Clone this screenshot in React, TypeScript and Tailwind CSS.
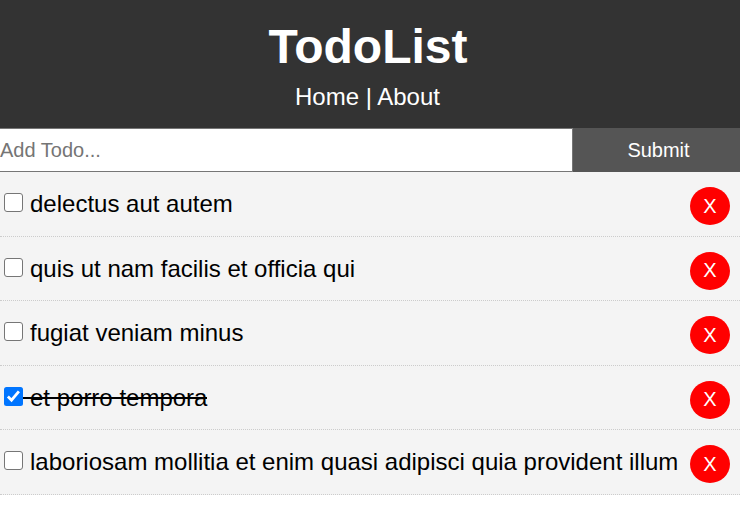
const todos = [
  { title: 'delectus aut autem', done: false, height: 'h-[65px]', inset: 'pb-0' },
  { title: 'quis ut nam facilis et officia qui', done: false, height: 'h-[64px]', inset: 'pb-[2px]' },
  { title: 'fugiat veniam minus', done: false, height: 'h-[65px]', inset: 'pb-0' },
  { title: 'et porro tempora', done: true, height: 'h-[64px]', inset: 'pb-[2px]' },
  { title: 'laboriosam mollitia et enim quasi adipisci quia provident illum', done: false, height: 'h-[65px]', inset: 'pb-0' },
];

function Checkbox({ checked }: { checked: boolean }) {
  return (
    <svg className="mt-[6px] ml-1 h-[19px] w-[19px] shrink-0" viewBox="0 0 19 19">
      {checked ? (
        <>
          <rect width="19" height="19" rx="2.5" fill="#0075ff" />
          <path d="M3.9 9.6 L7.5 13.2 L14.9 4.4" fill="none" stroke="#fff" strokeWidth="2.8" />
        </>
      ) : (
        <rect x="0.5" y="0.5" width="18" height="18" rx="2.5" fill="#fff" stroke="#767676" />
      )}
    </svg>
  );
}

export default function App() {
  return (
    <div className="h-[516px] w-[740px] overflow-hidden bg-white font-['Liberation_Sans',Arial,sans-serif] text-[24px] text-black">
      <header className="flex h-[128px] flex-col items-center bg-[#333] pt-[19px] pr-[5px] text-white">
        <h1 className="ml-[1px] text-[48px] leading-[56px] font-bold">TodoList</h1>
        <nav className="mt-[5px] leading-[34px]">Home | About</nav>
      </header>
      <form className="flex h-[44px]">
        <div className="flex w-[573px] items-center rounded-r-[1px] border border-l-0 border-[#767676] bg-white text-[20px] text-[#757575]">Add Todo...</div>
        <button type="button" className="flex-1 bg-[#555] pl-1 text-[20px] text-white">Submit</button>
      </form>
      <ul>
        {todos.map((t) => (
          <li key={t.title} className={`flex border-b border-dotted border-[#ccc] bg-[#f4f4f4] pt-[15px] pr-[10px] ${t.height}`}>
            <div className="relative flex flex-1 whitespace-nowrap">
              <Checkbox checked={t.done} />
              <span className="ml-[7px] leading-[34px]">{t.title}</span>
              {t.done && <span className="absolute top-[16px] left-[23px] h-[2px] w-[184px] bg-black" />}
            </div>
            <button type="button" className={`h-[38px] w-[40px] rounded-[50%] bg-[#f00] text-[20px] text-white ${t.inset}`}>X</button>
          </li>
        ))}
      </ul>
    </div>
  );
}
